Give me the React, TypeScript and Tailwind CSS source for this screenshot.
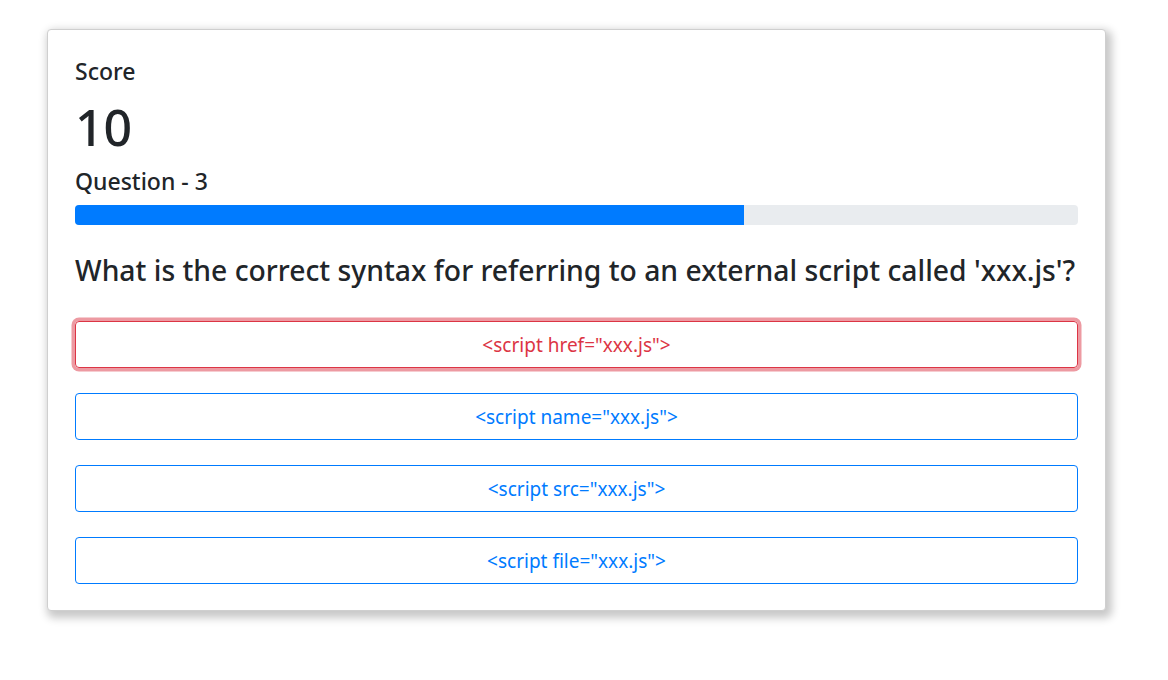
import React from "react";

const options = [
  { label: '<script href="xxx.js">', state: "wrong" },
  { label: '<script name="xxx.js">', state: "idle" },
  { label: '<script src="xxx.js">', state: "idle" },
  { label: '<script file="xxx.js">', state: "idle" },
];

const App = () => {
  return (
    <div className="min-h-[680px] w-full bg-white pt-[29px] font-['Noto_Sans',sans-serif] text-[#212529]">
      <div className="ml-[47px] w-[1059px] rounded-[4px] border border-[#cfcfcf] bg-white px-[27px] pb-[26px] pt-[25px] shadow-[3px_4px_8px_3px_rgba(0,0,0,0.22)]">
        <div className="text-[23px] font-medium leading-[32px]">Score</div>
        <div className="mt-[12px] text-[50px] font-medium leading-[56px]">10</div>
        <div className="mt-[11px] text-[23px] font-medium leading-[30px]">Question - 3</div>
        <div className="mt-[9px] flex h-[20px] w-full overflow-hidden rounded-[4px] bg-[#e9ecef]">
          <div className="h-full w-2/3 bg-[#007bff]" />
        </div>
        <h3 className="mt-[25px] whitespace-nowrap text-[28.3px] font-medium leading-[40px]">
          What is the correct syntax for referring to an external script called 'xxx.js'?
        </h3>
        <div className="mt-[31px] flex flex-col gap-[25px]">
          {options.map((o) => (
            <button
              key={o.label}
              className={
                o.state === "wrong"
                  ? "h-[47px] w-full rounded-[4px] border border-[#dc3545] pt-[2px] text-[19px] text-[#dc3545] shadow-[0_0_0_3.5px_rgba(220,53,69,0.5)]"
                  : "h-[47px] w-full rounded-[4px] border border-[#007bff] pt-[2px] text-[19px] text-[#007bff]"
              }
            >
              {o.label}
            </button>
          ))}
        </div>
      </div>
    </div>
  );
};

export default App;
